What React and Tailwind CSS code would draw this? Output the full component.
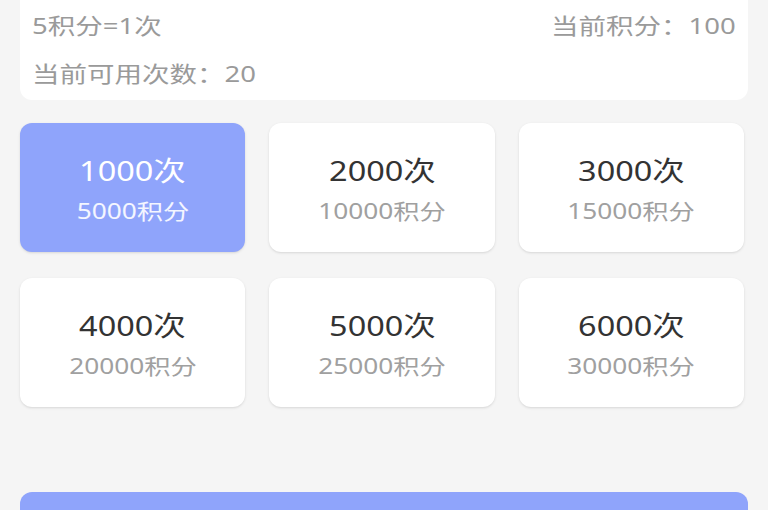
import React, { useState } from 'react';

const packages = [
  { times: 1000, points: 5000 },
  { times: 2000, points: 10000 },
  { times: 3000, points: 15000 },
  { times: 4000, points: 20000 },
  { times: 5000, points: 25000 },
  { times: 6000, points: 30000 },
];

export default function App() {
  const [selected, setSelected] = useState(0);

  return (
    <div
      className="h-screen bg-[#f5f5f5] px-5 overflow-hidden"
      style={{ fontFamily: '"Noto Sans", "Noto Sans CJK SC", sans-serif' }}
    >
      <div className="bg-white rounded-b-xl px-3 h-[100px] flex flex-col justify-between pt-[8px] pb-[10px] text-[22px] text-[#9a9a9a] leading-[34px]">
        <div className="flex justify-between">
          <span className="inline-block origin-left scale-x-125">5积分=1次</span>
          <span className="inline-block origin-right scale-x-125">当前积分：100</span>
        </div>
        <div>
          <span className="inline-block origin-left scale-x-125">当前可用次数：20</span>
        </div>
      </div>

      <div className="grid grid-cols-3 gap-x-6 gap-y-[26px] mt-[23px] mr-1">
        {packages.map((p, i) => {
          const active = i === selected;
          return (
            <button
              key={p.times}
              onClick={() => setSelected(i)}
              className={
                active
                  ? 'h-[129px] pt-[6px] rounded-xl bg-[#8fa4fb] text-white flex flex-col items-center justify-center shadow-sm'
                  : 'h-[129px] pt-[6px] rounded-xl bg-white flex flex-col items-center justify-center shadow-sm'
              }
            >
              <span className={active ? 'inline-block scale-x-120 text-[27px] leading-[40px]' : 'inline-block scale-x-120 text-[27px] leading-[40px] text-[#333]'}>
                {p.times}次
              </span>
              <span className={active ? 'inline-block scale-x-125 text-[21px] leading-[40px] text-white/90' : 'inline-block scale-x-125 text-[21px] leading-[40px] text-[#a0a0a0]'}>
                {p.points}积分
              </span>
            </button>
          );
        })}
      </div>

      <div className="mt-[85px] h-[60px] rounded-xl bg-[#8fa4fb]" />
    </div>
  );
}
